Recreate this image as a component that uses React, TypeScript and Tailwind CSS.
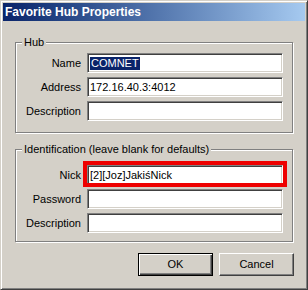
import React from "react";

const sunken =
  "h-[20px] border border-t-[#808080] border-l-[#808080] border-r-white border-b-white bg-white shadow-[inset_1px_1px_0_#404040,inset_-1px_-1px_0_#d4d0c8] pl-[2px] flex items-center whitespace-nowrap overflow-hidden";

function Field({ value, selected }: { value?: string; selected?: boolean }) {
  return (
    <div className={sunken}>
      {selected ? (
        <span className="bg-[#0a246a] text-white px-[1px] leading-[13px]">{value}</span>
      ) : (
        <span className="leading-[13px]">{value}</span>
      )}
    </div>
  );
}

function Group({ title, className, children }: { title: string; className: string; children: React.ReactNode }) {
  return (
    <div
      className={`relative border border-[#808080] shadow-[inset_1px_1px_0_#fff,1px_1px_0_#fff] pl-[7px] pr-[9px] ${className}`}
    >
      <span className="absolute left-[6px] -top-[7px] px-[2px] bg-[#d4d0c8] leading-[13px]">{title}</span>
      <div className="grid grid-cols-[58px_1fr] gap-x-[6px] gap-y-[4px] items-center">{children}</div>
    </div>
  );
}

function Label({ children }: { children: React.ReactNode }) {
  return <span className="text-right leading-[13px]">{children}</span>;
}

export default function App() {
  return (
    <div className="w-[308px] h-[290px] bg-[#d4d0c8] border border-t-[#d4d0c8] border-l-[#d4d0c8] border-r-[#404040] border-b-[#404040] shadow-[inset_1px_1px_0_#fff,inset_-1px_-1px_0_#808080] p-[2px] flex flex-col text-[11px] text-black font-['Liberation_Sans',Arial,sans-serif]">
      {/* Title bar */}
      <div className="h-[18px] bg-gradient-to-r from-[#0a246a] to-[#a6caf0] flex items-center pl-[2px]">
        <span className="text-white font-bold text-[12px] leading-[14px]">Favorite Hub Properties</span>
      </div>

      <div className="px-[12px] flex flex-col">
        <Group title="Hub" className="mt-[21px] pt-[10px] pb-[11px]">
          <Label>Name</Label>
          <Field value="COMNET" selected />
          <Label>Address</Label>
          <Field value="172.16.40.3:4012" />
          <Label>Description</Label>
          <Field />
        </Group>

        <Group title="Identification (leave blank for defaults)" className="mt-[16px] pt-[15px] pb-[8px]">
          <Label>Nick</Label>
          <div className="relative">
            <Field value="[2][Joz]JakiśNick" />
            <div className="absolute -left-[4px] -right-[4px] -top-[4px] -bottom-[2px] border-4 border-[#ee0000]" />
          </div>
          <Label>Password</Label>
          <Field />
          <Label>Description</Label>
          <Field />
        </Group>

        {/* Buttons */}
        <div className="mt-[11px] -mr-[1px] flex justify-end gap-[6px]">
          <button className="w-[75px] h-[23px] border border-black shadow-[inset_1px_1px_0_#fff,inset_-1px_-1px_0_#404040,inset_-2px_-2px_0_#808080] bg-[#d4d0c8] flex items-center justify-center leading-[13px]">
            OK
          </button>
          <button className="w-[75px] h-[23px] border border-t-white border-l-white border-r-[#404040] border-b-[#404040] shadow-[inset_-1px_-1px_0_#808080] bg-[#d4d0c8] flex items-center justify-center leading-[13px]">
            Cancel
          </button>
        </div>
      </div>
    </div>
  );
}
